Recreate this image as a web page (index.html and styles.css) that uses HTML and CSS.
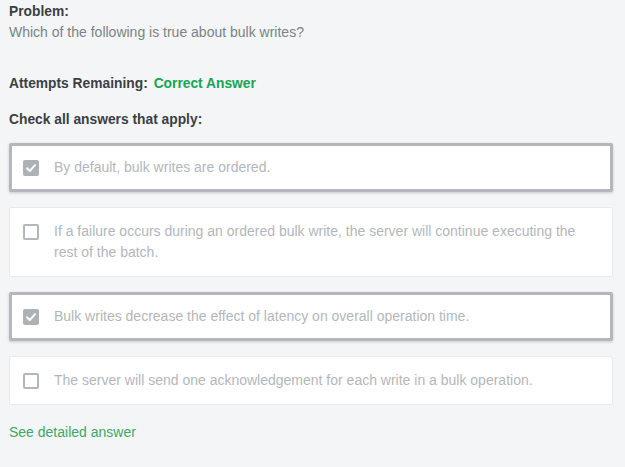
FILE: index.html
```html
<!DOCTYPE html>
<html>
<head>
<meta charset="utf-8">
<link rel="stylesheet" href="styles.css">
</head>
<body>
<div class="page">
  <div class="label">Problem:</div>
  <div class="question">Which of the following is true about bulk writes?</div>
  <div class="attempts"><span class="label">Attempts Remaining:</span> <span class="correct">Correct Answer</span></div>
  <div class="label instr">Check all answers that apply:</div>
  <div class="options">
    <div class="option selected">
      <span class="box checked"><svg viewBox="0 0 16 16" width="16" height="16"><path d="M4 8.3 L6.8 11 L12 5.2" fill="none" stroke="#fff" stroke-width="2" stroke-linecap="round" stroke-linejoin="round"/></svg></span>
      <span class="text">By default, bulk writes are ordered.</span>
    </div>
    <div class="option">
      <span class="box"></span>
      <span class="text">If a failure occurs during an ordered bulk write, the server will continue executing the rest of the batch.</span>
    </div>
    <div class="option selected">
      <span class="box checked"><svg viewBox="0 0 16 16" width="16" height="16"><path d="M4 8.3 L6.8 11 L12 5.2" fill="none" stroke="#fff" stroke-width="2" stroke-linecap="round" stroke-linejoin="round"/></svg></span>
      <span class="text">Bulk writes decrease the effect of latency on overall operation time.</span>
    </div>
    <div class="option">
      <span class="box"></span>
      <span class="text">The server will send one acknowledgement for each write in a bulk operation.</span>
    </div>
  </div>
  <a class="detail" href="#">See detailed answer</a>
</div>
</body>
</html>
```
FILE: styles.css
```css
html, body {
  margin: 0;
  padding: 0;
  background: #f4f5f7;
}
body {
  font-family: "Liberation Sans", Arial, sans-serif;
  font-size: 14px;
  line-height: 20px;
  color: #3d4246;
}
.page {
  padding: 2px 12px 0 9px;
  display: flex;
  flex-direction: column;
}
.label {
  font-weight: bold;
  color: #3b3f43;
  font-size: 13.8px;
}
.question {
  color: #7d8286;
}
.attempts {
  margin-top: 31px;
}
.correct {
  color: #16a550;
  font-weight: bold;
  font-size: 13.8px;
  margin-left: 2px;
}
.instr {
  margin-top: 16px;
}
.options {
  margin-top: 13px;
  display: flex;
  flex-direction: column;
  gap: 15px;
}
.option {
  display: flex;
  align-items: flex-start;
  gap: 15px;
  background: #fff;
  border: 1px solid #e8eaec;
  border-radius: 2px;
  padding: 13px 20px 13px 13px;
  line-height: 21px;
  color: #b3b7ba;
}
.option.selected {
  border: 3px solid #b4b8bc;
  padding: 11px 18px 11px 11px;
  box-shadow: 0 1px 3px rgba(0, 0, 0, 0.18);
}
.box {
  flex: none;
  width: 16px;
  height: 16px;
  box-sizing: border-box;
  border: 2px solid #b3b7bb;
  border-radius: 2px;
  background: #fff;
  margin-top: 3px;
  position: relative;
}
.box.checked {
  background: #adb2b7;
  border-color: #adb2b7;
}
.box svg {
  position: absolute;
  left: -2px;
  top: -2px;
}
.text {
  flex: 1;
}
.detail {
  margin-top: 17px;
  color: #3fa866;
  text-decoration: none;
  align-self: flex-start;
}
```
